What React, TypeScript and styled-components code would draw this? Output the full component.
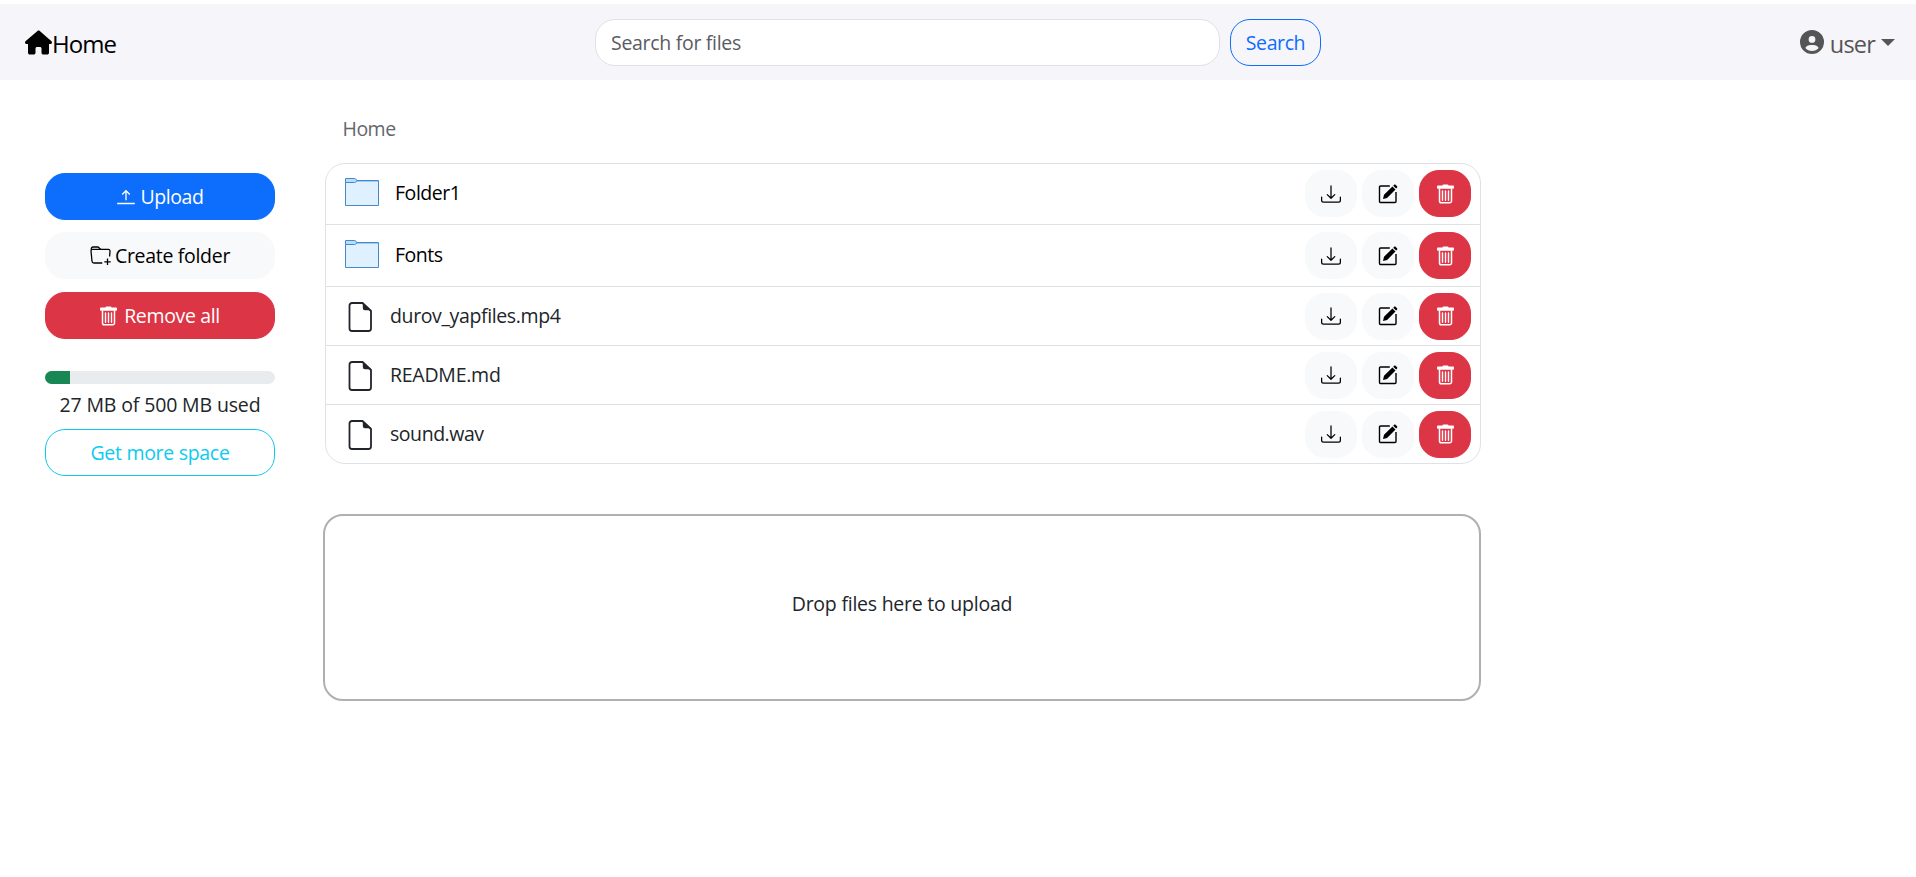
import React from "react";
import styled, { createGlobalStyle } from "styled-components";
import { FaHouse, FaCircleUser } from "react-icons/fa6";
import { BsDownload } from "react-icons/bs";

const GlobalStyle = createGlobalStyle`
  *, *::before, *::after { box-sizing: border-box; }
  body {
    margin: 0;
    background: #fff;
    color: #212529;
    font: 400 19.5px/30px "Open Sans", "Noto Sans", sans-serif;
  }
  button, input { font: inherit; }
  svg { display: block; flex: none; }
`;

const Page = styled.div`
  padding-top: 4px;
`;

const Navbar = styled.nav`
  display: grid;
  grid-template-columns: 595px 726px 1fr;
  align-items: center;
  height: 76px;
  background: #f5f5fa;
`;

const Brand = styled.a`
  display: flex;
  align-items: center;
  padding-left: 25px;
  padding-top: 3px;
  color: #000;
  font-size: 24px;
  letter-spacing: -0.95px;
  svg { margin-top: -2px; }
`;

const SearchForm = styled.form`
  display: flex;
  gap: 10px;
`;

const SearchInput = styled.input`
  width: 625px;
  height: 47px;
  padding: 1px 15px 0;
  border: 1px solid #dee2e6;
  border-radius: 20px;
  outline: 0;
  background: #fff;
  letter-spacing: -0.3px;
  &::placeholder { color: #595c5f; opacity: 1; }
`;

const Account = styled.div`
  display: flex;
  align-items: center;
  justify-content: flex-end;
  padding-right: 21px;
  padding-top: 3px;
  color: #555;
  font-size: 23.5px;
  letter-spacing: -0.8px;
  svg { margin: -3px 6px 0 0; }
  &::after {
    content: "";
    margin: -3px 0 0 6px;
    border: 7px solid transparent;
    border-top-color: #555;
    border-bottom: 0;
  }
`;

type Tone = "primary" | "light" | "danger" | "outlinePrimary" | "outlineInfo";

const tones: Record<Tone, string> = {
  primary: "color: #fff; background: #0d6efd; border-color: #0d6efd;",
  light: "color: #000; background: #f8f9fa; border-color: #f8f9fa;",
  danger: "color: #fff; background: #dc3545; border-color: #dc3545;",
  outlinePrimary: "color: #0d6efd; background: transparent; border-color: #0d6efd;",
  outlineInfo: "color: #0dcaf0; background: transparent; border-color: #0dcaf0;",
};

const Button = styled.button<{ $tone: Tone; $width: string; $gap?: number; $spacing?: number }>`
  display: flex;
  flex: none;
  align-items: center;
  justify-content: center;
  gap: ${(p) => p.$gap ?? 0}px;
  width: ${(p) => p.$width};
  height: 47px;
  padding: 1px 0 0;
  border: 1px solid;
  border-radius: 20px;
  letter-spacing: ${(p) => p.$spacing ?? 0}px;
  white-space: nowrap;
  ${(p) => tones[p.$tone]}
`;

const IconButton = styled(Button)`
  padding: 0;
`;

const Layout = styled.div`
  display: grid;
  grid-template-columns: 230px 1158px;
  column-gap: 48px;
  padding-left: 45px;
`;

const Sidebar = styled.aside`
  padding-top: 93px;
`;

const Actions = styled.div`
  display: flex;
  flex-direction: column;
  gap: 12px;
  & > :last-child { margin-top: 1px; }
`;

const Progress = styled.div`
  display: flex;
  height: 13px;
  margin-top: 32px;
  overflow: hidden;
  border-radius: 6.5px;
  background: #e9ecef;
`;

const ProgressBar = styled.div`
  width: 25px;
  background: #198754;
`;

const Usage = styled.p`
  margin: 6px -5px 9px;
  text-align: center;
  letter-spacing: -0.14px;
  white-space: nowrap;
`;

const Main = styled.main`
  padding-top: 34px;
`;

const Breadcrumb = styled.div`
  padding-left: 19.5px;
  color: #63676b;
  letter-spacing: -0.5px;
`;

const FileList = styled.ul`
  width: 1156px;
  margin: 19px 0 0 2px;
  padding: 0;
  border: 1px solid #dee2e6;
  border-radius: 20px;
  list-style: none;
`;

const Row = styled.li<{ $height: number }>`
  display: flex;
  align-items: center;
  height: ${(p) => p.$height}px;
  padding: 0 9px 0 18px;
  &:first-child { padding-bottom: 1px; }
  & + & { border-top: 1px solid #dee2e6; }
`;

const EntryIcon = styled.span<{ $folder: boolean }>`
  margin: ${(p) => (p.$folder ? "0 0 4px" : "2px 0 0")};
`;

const EntryName = styled.span<{ $folder: boolean; $spacing: number }>`
  flex: 1;
  margin-left: ${(p) => (p.$folder ? 15 : 17)}px;
  padding-bottom: ${(p) => (p.$folder ? 2 : 1)}px;
  color: ${(p) => (p.$folder ? "#000" : "#212529")};
  letter-spacing: ${(p) => p.$spacing}px;
`;

const RowActions = styled.div`
  display: flex;
  gap: 5px;
`;

const DropZone = styled.div`
  display: flex;
  align-items: center;
  justify-content: center;
  height: 187px;
  margin-top: 50px;
  padding-bottom: 7px;
  border: 2px solid #b0b0b0;
  border-radius: 20px;
  letter-spacing: -0.24px;
`;

const UploadIcon = () => (
  <svg width="18" height="16" viewBox="0 0 18 16" fill="none" stroke="currentColor" strokeWidth="1.3">
    <path d="M.2 14.5h17.6M9 11.3V2M5.2 5.5 9 1.7l3.8 3.8" />
  </svg>
);

const CreateFolderIcon = () => (
  <svg width="21" height="20" viewBox="0 0 21 20" fill="none" stroke="currentColor" strokeWidth="1.3">
    <path d="M12.3 17H4a2 2 0 0 1-2-1.8L1 5a1.5 1.5 0 0 1 1.5-1.6h16A1.5 1.5 0 0 1 20 5l-.4 5.5M1.3 4V2.7A1.7 1.7 0 0 1 3 1h4.4c2 0 2.1 2.4 4.2 2.4M17.5 12.5v6.5M14.3 15.8h6.4" />
  </svg>
);

const TrashIcon = () => (
  <svg width="17" height="20" viewBox="0 0 17 20">
    <path d="M5.5 1.5a1 1 0 0 1 1-1h4a1 1 0 0 1 1 1H16a1 1 0 0 1 1 1v1.3a1 1 0 0 1-1 1H1a1 1 0 0 1-1-1V2.500a1 1 0 0 1 1-1h4.500Z" fill="currentColor" />
    <path d="M2.500 4.500v12.500a1.800 1.800 0 0 0 1.800 1.800h8.400a1.800 1.800 0 0 0 1.800-1.800V4.500" fill="none" stroke="currentColor" strokeWidth="1.500" />
    <path d="M5.500 7v9.300M8.500 7v9.300M11.500 7v9.300" fill="none" stroke="currentColor" strokeWidth="1.400" strokeLinecap="round" />
  </svg>
);

const EditIcon = () => (
  <svg width="20" height="20" viewBox="0 0 20 20">
    <path d="M11.8 2H2.5a1 1 0 0 0-1 1v14.5a1 1 0 0 0 1 1H17a1 1 0 0 0 1-1V8" fill="none" stroke="currentColor" strokeWidth="1.4" />
    <path d="m5 15 1-4.2 8.4-8.4 3.1 3.1-8.4 8.4L5 15ZM15.2 1.7l.8-.8c.5-.5 1.2-.5 1.7 0l1.2 1.2c.5.5.5 1.2 0 1.7l-.8.8-2.9-2.9Z" fill="currentColor" />
  </svg>
);

const FileIcon = () => (
  <svg width="29" height="32" viewBox="0 0 29 32">
    <path d="M18.500 2H8a2.500 2.500 0 0 0-2.500 2.500v23A2.500 2.500 0 0 0 8 30h16.500a2.500 2.500 0 0 0 2.500-2.500V10L18.500 2Z" fill="none" stroke="currentColor" strokeWidth="1.8" />
    <path d="M18.800 1.500V7a2.200 2.200 0 0 0 2.200 2.200h6L18.800 1.500Z" fill="currentColor" />
  </svg>
);

const FolderIcon = () => (
  <svg width="36" height="30" viewBox="0 0 36 30">
    <path d="M1.5 3.5h33v25h-33z" fill="#dff0fe" stroke="#4788c7" />
    <path d="M12 4h22v1H12z" fill="#98ccfd" />
    <path d="M1.5 5.5v-4h9.3c1.200 0 1.600 2 2.200 2-.7 1.300-1.200 2-2.400 2H1.500Z" fill="#b6dcfe" stroke="#4788c7" />
  </svg>
);

interface Entry {
  name: string;
  folder: boolean;
  height: number;
  spacing: number;
}

const entries: Entry[] = [
  { name: "Folder1", folder: true, height: 60, spacing: -0.45 },
  { name: "Fonts", folder: true, height: 62, spacing: -0.5 },
  { name: "durov_yapfiles.mp4", folder: false, height: 59, spacing: -0.38 },
  { name: "README.md", folder: false, height: 59, spacing: -0.25 },
  { name: "sound.wav", folder: false, height: 59, spacing: -0.45 },
];

const FileRow = ({ name, folder, height, spacing }: Entry) => (
  <Row $height={height}>
    <EntryIcon $folder={folder}>{folder ? <FolderIcon /> : <FileIcon />}</EntryIcon>
    <EntryName $folder={folder} $spacing={spacing}>{name}</EntryName>
    <RowActions>
      <IconButton $tone="light" $width="52px" aria-label="Download"><BsDownload size={20} /></IconButton>
      <IconButton $tone="light" $width="52px" aria-label="Rename"><EditIcon /></IconButton>
      <IconButton $tone="danger" $width="52px" aria-label="Delete"><TrashIcon /></IconButton>
    </RowActions>
  </Row>
);

export default function App() {
  return (
    <Page>
      <GlobalStyle />
      <Navbar>
        <Brand><FaHouse size={27} height={24} />Home</Brand>
        <SearchForm onSubmit={(e) => e.preventDefault()}>
          <SearchInput placeholder="Search for files" />
          <Button type="button" $tone="outlinePrimary" $width="91px" $spacing={-0.4}>Search</Button>
        </SearchForm>
        <Account><FaCircleUser size={24} />user</Account>
      </Navbar>
      <Layout>
        <Sidebar>
          <Actions>
            <Button $tone="primary" $width="100%" $gap={6} $spacing={-0.45}><UploadIcon />Upload</Button>
            <Button $tone="light" $width="100%" $gap={4} $spacing={-0.3}><CreateFolderIcon />Create folder</Button>
            <Button $tone="danger" $width="100%" $gap={7} $spacing={-0.35}><TrashIcon />Remove all</Button>
          </Actions>
          <Progress><ProgressBar /></Progress>
          <Usage>27 MB of 500 MB used</Usage>
          <Button $tone="outlineInfo" $width="100%" $spacing={-0.3}>Get more space</Button>
        </Sidebar>
        <Main>
          <Breadcrumb>Home</Breadcrumb>
          <FileList>{entries.map((entry) => <FileRow key={entry.name} {...entry} />)}</FileList>
          <DropZone>Drop files here to upload</DropZone>
        </Main>
      </Layout>
    </Page>
  );
}
